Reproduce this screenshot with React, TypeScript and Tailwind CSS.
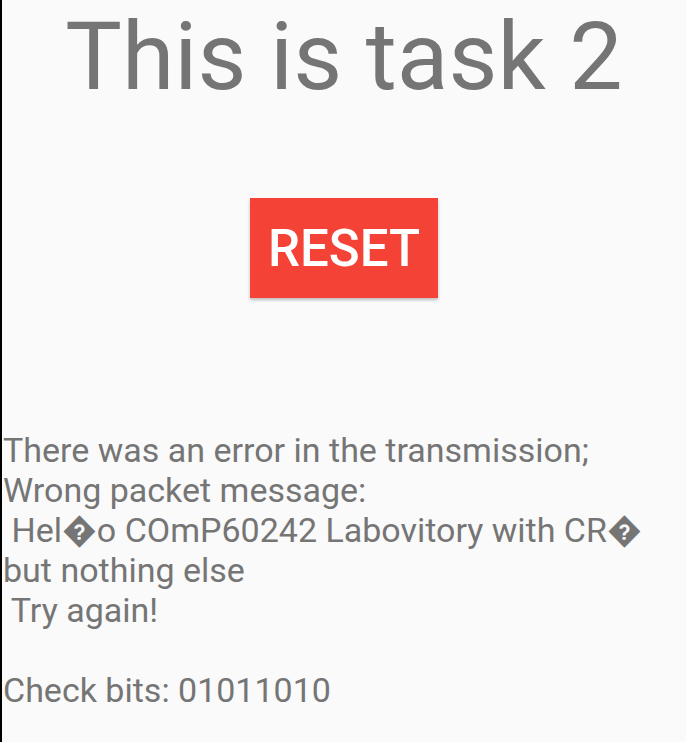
import React from "react";

export default function App() {
  const lines = [
    "There was an error in the transmission;",
    "Wrong packet message:",
    " Hel\uFFFDo COmP60242 Labovitory with CR\uFFFD",
    "but nothing else",
    " Try again!",
    "",
    "Check bits: 01011010",
  ];
  return (
    <div
      className="w-[686px] h-[742px] bg-[#fafafa] border-l-2 border-black overflow-hidden text-[#757575]"
      style={{ fontFamily: "Roboto, 'DejaVu Sans', sans-serif" }}
    >
      <h1 className="text-center text-[95px] leading-[114px] font-normal">This is task 2</h1>
      <div className="flex justify-center mt-[84px]">
        <button className="w-[188px] h-[100px] bg-[#f44336] text-white text-[51px] font-medium leading-none flex items-center justify-center shadow-[0_2px_3px_rgba(0,0,0,0.25)]">
          RESET
        </button>
      </div>
      <div className="mt-[132px] pl-[1px] text-[34px] leading-[40px] whitespace-pre">
        {lines.map((l, i) => (
          <div key={i} className="h-[40px]">{l}</div>
        ))}
      </div>
    </div>
  );
}
